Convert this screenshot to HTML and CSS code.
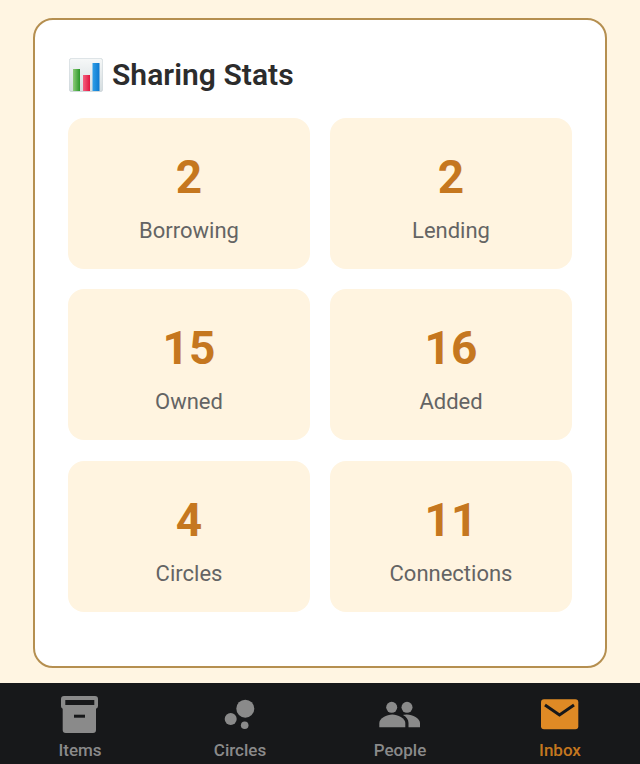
FILE: index.html
```html
<!DOCTYPE html>
<html lang="en">
<head>
<meta charset="utf-8">
<title>Sharing Stats</title>
<link rel="stylesheet" href="styles.css">
</head>
<body>
<main class="content">
  <section class="card">
    <h1 class="title">
      <svg class="chart" viewBox="0 0 34 34" aria-hidden="true">
        <defs>
          <linearGradient id="bg" x1="0" y1="0" x2="0" y2="1"><stop offset="0" stop-color="#f6f8f8"/><stop offset="1" stop-color="#d5dde0"/></linearGradient>
          <linearGradient id="g" x1="0" y1="0" x2="1" y2="0"><stop offset="0" stop-color="#8ccb78"/><stop offset="1" stop-color="#2a9628"/></linearGradient>
          <linearGradient id="r" x1="0" y1="0" x2="1" y2="0"><stop offset="0" stop-color="#f4607f"/><stop offset="1" stop-color="#e0153f"/></linearGradient>
          <linearGradient id="b" x1="0" y1="0" x2="1" y2="0"><stop offset="0" stop-color="#2f9fe8"/><stop offset="1" stop-color="#0b78cf"/></linearGradient>
        </defs>
        <rect x="0.3" y="0.3" width="33.400" height="33.400" rx="2.500" fill="url(#bg)" stroke="#c3cdd1" stroke-width="0.6"/>
        <rect x="4" y="11" width="7" height="22" fill="url(#g)"/>
        <rect x="14" y="17" width="7" height="16" fill="url(#r)"/>
        <rect x="23.500" y="5" width="7" height="28" fill="url(#b)"/>
      </svg>
      <span>Sharing Stats</span>
    </h1>
    <div class="grid">
      <div class="tile"><div class="num">2</div><div class="label">Borrowing</div></div>
      <div class="tile"><div class="num">2</div><div class="label">Lending</div></div>
      <div class="tile"><div class="num">15</div><div class="label">Owned</div></div>
      <div class="tile"><div class="num">16</div><div class="label">Added</div></div>
      <div class="tile"><div class="num">4</div><div class="label">Circles</div></div>
      <div class="tile"><div class="num">11</div><div class="label">Connections</div></div>
    </div>
  </section>
</main>
<nav class="nav">
  <div class="tab">
    <svg class="icon" viewBox="0 0 38 38" aria-hidden="true"><path fill="#8a8a8a" d="M3 1h31a3 3 0 0 1 3 3v7a3 3 0 0 1-2 2.800V35a3 3 0 0 1-3 3H4.700a3 3 0 0 1-3-3V13.800A3 3 0 0 1 0 11V4a3 3 0 0 1 3-3z"/><rect x="4.300" y="5" width="29" height="5" fill="#17181a"/><rect x="13" y="19.700" width="11" height="3" fill="#17181a"/></svg>
    <span>Items</span>
  </div>
  <div class="tab">
    <svg class="icon" viewBox="0 0 38 38" aria-hidden="true"><circle cx="24.300" cy="13.700" r="9" fill="#8a8a8a"/><circle cx="9.700" cy="24" r="6" fill="#8a8a8a"/><circle cx="23.700" cy="30.300" r="3.800" fill="#8a8a8a"/></svg>
    <span>Circles</span>
  </div>
  <div class="tab">
    <svg class="icon wide" viewBox="0 0 42 38" aria-hidden="true"><circle cx="12.700" cy="12.300" r="5.500" fill="#8a8a8a"/><circle cx="28" cy="12.300" r="5.500" fill="#8a8a8a"/><path fill="#8a8a8a" d="M.3 32.300v-4.300c0-4.500 7.500-8.500 13-8.500s13 4 13 8.500v4.300z"/><path fill="#8a8a8a" d="M24 20c1.200-.3 3-.5 4-.5 5.500 0 13 3.800 13 8.500v4.300H29.500V28c0-3.300-2-6.200-5.500-8z"/></svg>
    <span>People</span>
  </div>
  <div class="tab active">
    <svg class="icon" viewBox="0 0 38 38" aria-hidden="true"><rect x="0" y="4.300" width="37.300" height="30" rx="3" fill="#df8a25"/><path d="M4 10 18.500 20 33 10" fill="none" stroke="#17181a" stroke-width="3"/></svg>
    <span>Inbox</span>
  </div>
</nav>
</body>
</html>
```

FILE: styles.css
```css
* { box-sizing: border-box; }

html, body { height: 100%; }

body {
  margin: 0;
  background: #fff5e2;
  font-family: Roboto, "Liberation Sans", sans-serif;
  display: flex;
  flex-direction: column;
  overflow: hidden;
}

.content {
  flex: 1;
  padding: 18px 33px 0;
}

.card {
  height: 650px;
  background: #fff;
  border: 2px solid #b58f50;
  border-radius: 20px;
  padding: 32px 33px 0;
}

.title {
  margin: 0 0 22px;
  height: 44px;
  display: flex;
  align-items: center;
  gap: 9px;
  font-size: 30px;
  font-weight: 600;
  letter-spacing: 0.05px;
  color: #2c2c2c;
}

.chart { width: 34px; height: 34px; flex: none; margin: 2px 0 0 1px; }

.grid {
  display: grid;
  grid-template-columns: 1fr 1fr;
  gap: 20.250px 20px;
}

.tile {
  height: 151px;
  background: #fff4e0;
  border-radius: 16px;
  display: flex;
  flex-direction: column;
  align-items: center;
  padding-top: 33px;
}

.num {
  font-size: 46px;
  line-height: 52px;
  font-weight: 700;
  color: #c5771f;
}

.label {
  margin-top: 13px;
  font-size: 22px;
  line-height: 30px;
  color: #646464;
}

.nav {
  flex: none;
  height: 81.500px;
  background: #17181a;
  display: grid;
  grid-template-columns: repeat(4, 1fr);
}

.tab {
  display: flex;
  flex-direction: column;
  align-items: center;
  padding-top: 12.500px;
  color: #8a8a8a;
  font-size: 17px;
  font-weight: 500;
  line-height: 22px;
}

.icon { width: 38px; height: 38px; margin-bottom: 6px; flex: none; }
.icon.wide { width: 42px; }

.tab.active { color: #c5771f; }
```
